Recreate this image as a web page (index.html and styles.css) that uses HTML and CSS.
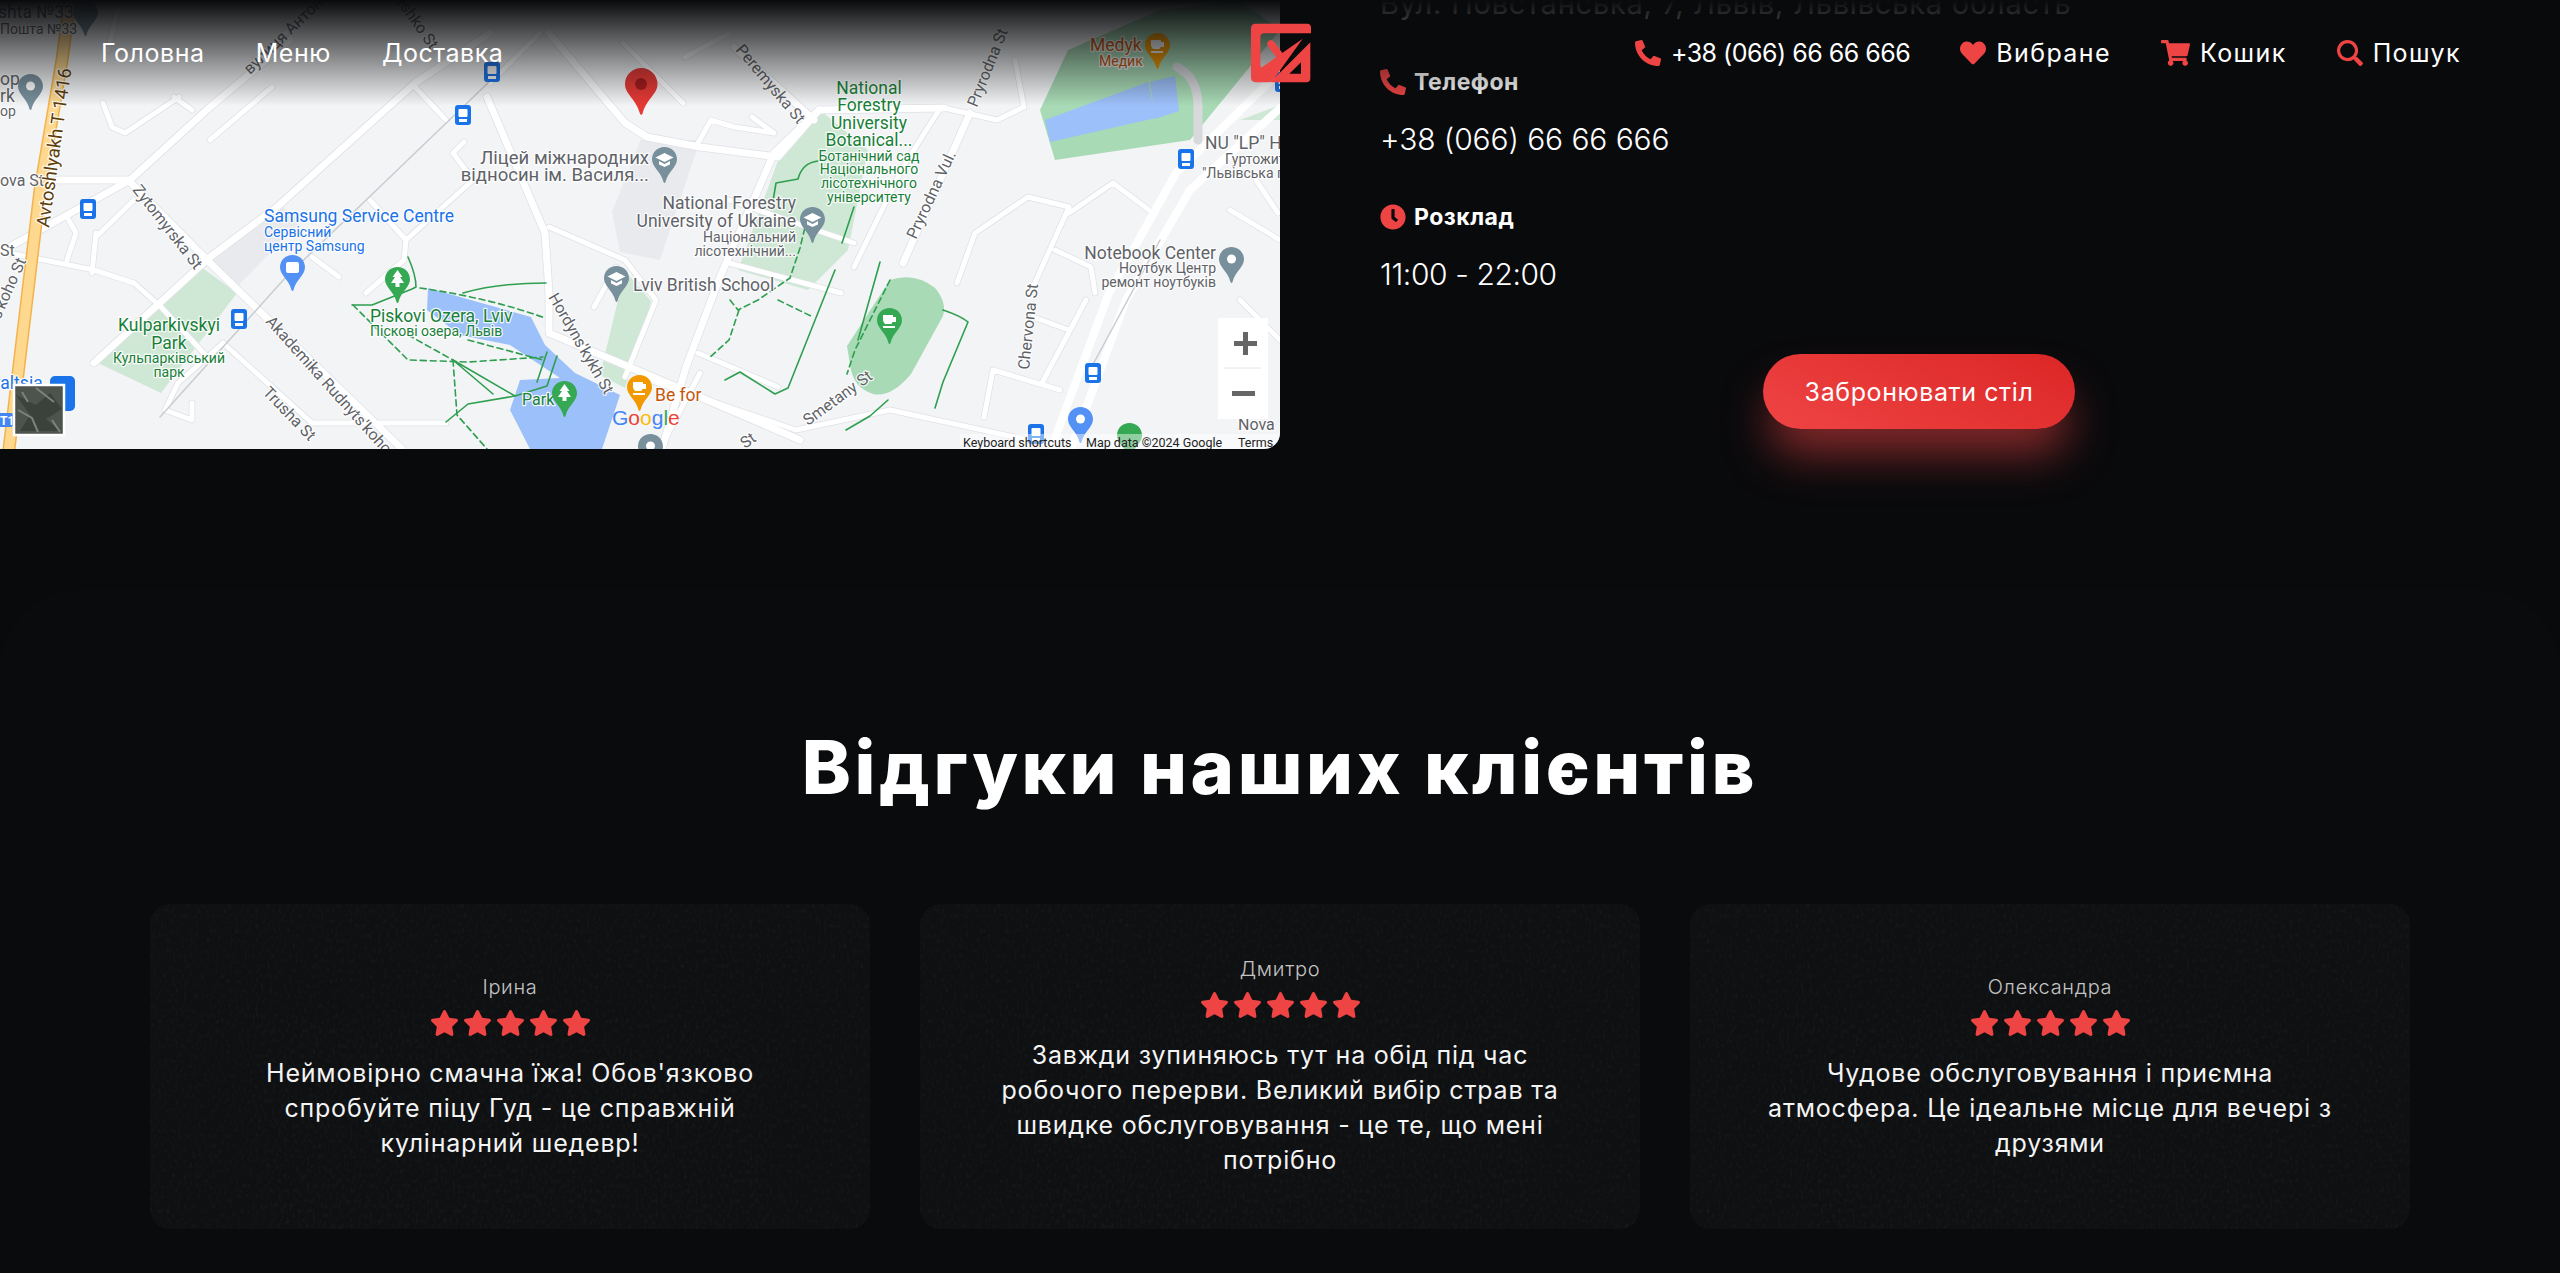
FILE: index.html
```html
<!DOCTYPE html>
<html lang="uk">
<head>
<meta charset="utf-8">
<title>Відгуки наших клієнтів</title>
<link rel="stylesheet" href="styles.css">
</head>
<body>
<svg class="defs" width="0" height="0" aria-hidden="true">
  <defs>
    <symbol id="i-phone" viewBox="0 0 512 512"><path d="M497.39 361.8l-112-48a24 24 0 0 0-28 6.9l-49.6 60.6A370.66 370.66 0 0 1 130.6 204.11l60.6-49.6a23.94 23.94 0 0 0 6.9-28l-48-112A24.16 24.16 0 0 0 122.6.61l-104 24A24 24 0 0 0 0 48c0 256.5 207.9 464 464 464a24 24 0 0 0 23.4-18.6l24-104a24.29 24.29 0 0 0-14.01-27.6z"/></symbol>
    <symbol id="i-heart" viewBox="0 0 512 512"><path d="M462.3 62.6C407.5 15.9 326 24.3 275.7 76.2L256 96.5l-19.7-20.3C186.1 24.3 104.5 15.9 49.7 62.6c-62.8 53.6-66.1 149.8-9.9 207.9l193.5 199.8c12.5 12.9 32.8 12.9 45.3 0l193.5-199.8c56.3-58.1 53-154.3-9.8-207.9z"/></symbol>
    <symbol id="i-cart" viewBox="0 0 576 512"><path d="M528.12 301.319l47.273-208C578.806 78.301 567.391 64 551.99 64H159.208l-9.166-44.81C147.758 8.021 137.93 0 126.529 0H24C10.745 0 0 10.745 0 24v16c0 13.255 10.745 24 24 24h69.883l70.248 343.435C147.325 417.1 136 435.222 136 456c0 30.928 25.072 56 56 56s56-25.072 56-56c0-15.674-6.447-29.835-16.824-40h209.647C430.447 426.165 424 440.326 424 456c0 30.928 25.072 56 56 56s56-25.072 56-56c0-22.172-12.888-41.332-31.579-50.405l5.517-24.276c3.413-15.018-8.002-29.319-23.403-29.319H218.117l-6.545-32h293.145c11.206 0 20.92-7.754 23.403-18.681z"/></symbol>
    <symbol id="i-search" viewBox="0 0 512 512"><path d="M505 442.7L405.3 343c-4.5-4.5-10.6-7-17-7H372c27.6-35.3 44-79.7 44-128C416 93.1 322.9 0 208 0S0 93.1 0 208s93.1 208 208 208c48.3 0 92.7-16.4 128-44v16.3c0 6.4 2.5 12.5 7 17l99.7 99.7c9.4 9.4 24.6 9.4 33.9 0l28.3-28.3c9.4-9.4 9.4-24.6.1-34zM208 352c-79.5 0-144-64.4-144-144 0-79.5 64.5-144 144-144 79.500 0 144 64.500 144 144 0 79.600-64.500 144-144 144z"/></symbol>
    <symbol id="i-clock" viewBox="0 0 512 512"><path d="M256,8C119,8,8,119,8,256S119,504,256,504,504,393,504,256,393,8,256,8Zm92.49,313h0l-20,25a16,16,0,0,1-22.49,2.5h0l-67-49.72a40,40,0,0,1-15-31.23V112a16,16,0,0,1,16-16h32a16,16,0,0,1,16,16V256l58,42.5A16,16,0,0,1,348.49,321Z"/></symbol>
    <symbol id="i-star" viewBox="0 0 576 512"><path d="M259.3 17.8L194 150.2 47.9 171.5c-26.2 3.8-36.7 36.1-17.7 54.6l105.7 103-25 145.5c-4.5 26.3 23.2 46 46.4 33.7L288 439.6l130.7 68.7c23.2 12.2 50.9-7.4 46.4-33.7l-25-145.500 105.700-103c19-18.500 8.500-50.800-17.700-54.600L382 150.200 316.700 17.800c-11.700-23.600-45.600-24.100-57.400 0z"/></symbol>
    <path id="pin" d="M12.500 0C5.600 0 0 5.400 0 12.300c0 8 8.500 11.500 11.500 22.700.3 1.200 1.700 1.200 2 0C16.500 23.800 25 20.300 25 12.300 25 5.400 19.400 0 12.500 0z"/>
    <g id="bus"><rect width="16" height="20" rx="3"/><rect x="3.500" y="4" width="9" height="8" rx="1" fill="#fff"/><rect x="4" y="14" width="8" height="3" fill="#fff"/></g>
    <g id="edu"><path d="M12.500 6l9 4.500-9 4.500-9-4.500z" fill="#fff"/><path d="M7 14v3.500l5.500 2.500 5.500-2.500V14l-5.500 3z" fill="#fff"/></g>
    <g id="tree"><path d="M12.500 3l5 7h-2.500l4 6h-4.500v4h-4v-4H6l4-6H7.500z" fill="#fff"/></g>
    <g id="cup"><path d="M6 7h10v2h3v5h-3.500l-1 2H8l-2-3zM6 18h12v2H6z" fill="#fff"/></g>
    <g id="dot"><circle cx="12.500" cy="12" r="4.500" fill="#fff"/></g>
    <filter id="grain" x="0" y="0" width="100%" height="100%">
      <feTurbulence type="fractalNoise" baseFrequency="0.35 0.2" numOctaves="3" seed="7"/>
      <feColorMatrix values="0 0 0 0 1  0 0 0 0 1  0 0 0 0 1  0 0 0 1.6 -0.75"/>
    </filter>
    <g id="minor">
      <path d="M103 103l9 24 13 6 54-36M174 97l18 13M210 140l62-53M415 87l31 33M464 142l-11 11 20 27-67 60-2 20-38 33M370 200l36 40M96 233l-4 40M96 237l38-37M67 260l9-27-9-16M312 257l27 20M549 227l76 33 31 40-31 77M594 307l22-40M223 343l-45 40-13 27 27 10v-17M698 143l13-23 23 7 40 6M752 117l22 16M685 57l45-24M944 108l53 12 27-13-9-47M854 243l-125-43M729 263l112 30M698 353l80 34M993 370l-9 47M993 370l67 20M1033 287l36-80-41-10-53 36-18 50M1069 213l44-30 40 30M1055 250l36 17 4 26M1086 300l-44 83M1033 317l36 13M1256 180l22 33M9 253l85 17 40 13 27 24 49 53M623 43l60 60M540 33l-50 50M700 373l-40 76M120 0l-12 50M255 60l45-40M1230 210l50 30M1240 300l40 40"/>
      <path d="M939 110l-36 57-49 100"/>
      <path d="M223 343l89 80h134M640 377l156 53 94-20 152 33"/>
    </g>
    <g id="major">
      <path d="M4 250l126-70 80-73 80-67"/>
      <path d="M94 363l116-106 67-50 138-124 75-50"/>
      <path d="M130 182l80 81 192 186"/>
      <path d="M487 97l58 136 4 60v40l151 64 100 43"/>
      <path d="M549 33l76 90 22 14 53 10 78 10 41-47 125-2"/>
      <path d="M819 110l-45 43-54 124-34 90-24 82"/>
      <path d="M734 47l80 73M58 180h72"/>
      <path d="M970 113l-67 150"/>
    </g>
  </defs>
</svg>

<div class="page">
  <header class="header">
    <nav class="nav">
      <a class="nav-link">Головна</a>
      <a class="nav-link">Меню</a>
      <a class="nav-link">Доставка</a>
    </nav>
    <svg class="logo" viewBox="90 70 180 175" role="img" aria-label="Логотип">
      <path d="M104 70H258Q270 70 270 82V98H130Q118 98 118 110V192Q118 205 127 197L245 115L158 236Q152 245 142 245H104Q90 245 90 231V84Q90 70 104 70Z"/>
      <path d="M150 130L178 168" class="logo-arm"/>
      <path fill-rule="evenodd" d="M268 125V233Q268 245 256 245H148ZM240 185V220H205Z"/>
    </svg>
    <nav class="nav nav-right">
      <a class="nav-link nav-phone"><svg class="ico"><use href="#i-phone"/></svg>+38 (066) 66 66 666</a>
      <a class="nav-link"><svg class="ico"><use href="#i-heart"/></svg>Вибране</a>
      <a class="nav-link"><svg class="ico ico-wide"><use href="#i-cart"/></svg>Кошик</a>
      <a class="nav-link"><svg class="ico"><use href="#i-search"/></svg>Пошук</a>
    </nav>
  </header>

  <section class="top">
    <div class="map">
      <svg class="map-svg" viewBox="0 0 1280 449" role="img" aria-label="Карта">
        <rect class="m-land" width="1280" height="449"/>
        <path class="m-block" d="M212 258l66-54 24 16-70 72zM640 140h60l-40 120-40-8-8-40 28-70zM620 230l-20 20"/>
        <path class="m-park-light" d="M98 363l103-96 36 26-76 100zM600 375l25-104 26 30 -6 25-20 62zM780 155l40-45 48 40-20 100-40 40-70-20zM1240 120l40-15v15z"/>
        <path class="m-park" d="M1040 110L1068 50l92-40 80-10 40 30-90 110-135 20z"/>
        <path class="m-water" d="M1045 120L1148 82l8 36-106 24zM1150 82l25-6 4 35-24 8z"/>
        <path class="m-park" d="M890 280q25-8 45 8 12 14 8 28l-32 58q-20 24-38 20-18-6-22-24l-4-24z"/>
        <path class="m-water" d="M428 288l103 29 14 28 30 28 45 22-18 54h-72l-20-39 10-30 40-2-50-33-50-10-33-25z"/>
        <use href="#minor" class="r-case r-minor"/>
        <use href="#major" class="r-case r-major"/>
        <use href="#minor" class="r-fill r-minor"/>
        <use href="#major" class="r-fill r-major"/>
        <path class="r-hw-case" d="M70 0L62 60 40 190 9 449"/>
        <path class="r-hw" d="M70 0L62 60 40 190 9 449"/>
        <path class="r-main" d="M1290 62L1176 173l-67 120-58 156"/>
        <path class="r-main-2" d="M1300 90L1190 190l-64 110-55 149"/>
        <path class="r-rail" d="M160 417L286 277 491 80M1160 240l-70 130"/>
        <path class="r-service" d="M1177 67q21 10 21 40v33"/>
        <path class="t-solid" d="M408 257q8 18 8 30l-4 2-40 16-20 0M463 293q35-10 83-10M453 360l62 36 32-10 10-30M453 360l40 34M515 396l-47 8-22 18M547 352l-10 30M818 161q-16 2-20 18l-22 4-3 18M854 207l-12 36M835 270l-47 118-13 6-35-22-15 8M880 262l-22 78M943 310q18 6 25 12l-25 60-8 26M888 400l-18 16-24 14"/>
        <path class="t-dash" d="M353 305l55 55 60 2 75-5M420 288q70 10 125 30M453 360l4 55 30 34M408 335l45 25M468 340l75 20M730 300l8 10 20-10 32-22 10-30 6-25M778 300l35 17M739 310l-10 30-20 18M890 280l-35 70-8 24"/>

        <g class="lbl lbl-grey">
          <text class="t-lg" x="-2" y="18">shta №33</text>
          <text class="t-sm" x="0" y="34">Пошта №33</text>
          <text class="t-lg" x="0" y="85">op</text><text class="t-lg" x="0" y="102">rk</text><text class="t-sm" x="0" y="116">op</text>
          <text class="t-md" x="0" y="186">ova St</text>
          <text class="t-md" x="0" y="256">St</text>
          <text class="t-md" transform="translate(0 320) rotate(-66)">s'koho St</text>
          <text class="t-md" transform="translate(132 190) rotate(52)">Zytomyrska St</text>
          <text class="t-md" transform="translate(265 322) rotate(48)">Akademika Rudnyts'koho St</text>
          <text class="t-md" transform="translate(262 393) rotate(46)">Trusha St</text>
          <text class="t-md" transform="translate(548 297) rotate(60)">Hordyns'kykh St</text>
          <text class="t-md" transform="translate(250 75) rotate(-44)">вулиця Антоно</text>
          <text class="t-md" transform="translate(395 0) rotate(55)">eshko St</text>
          <text class="t-md" transform="translate(735 50) rotate(50)">Peremyska St</text>
          <text class="t-md" transform="translate(977 108) rotate(-68)">Pryrodna St</text>
          <text class="t-md" transform="translate(916 240) rotate(-65)">Pryrodna Vul.</text>
          <text class="t-md" transform="translate(1029 370) rotate(-84)">Chervona St</text>
          <text class="t-md" transform="translate(808 426) rotate(-36)">Smetany St</text>
          <text class="t-md" transform="translate(745 449) rotate(-35)">St</text>
          <text class="t-xl end" x="649" y="164">Ліцей міжнародних</text>
          <text class="t-xl end" x="649" y="181">відносин ім. Василя...</text>
          <text class="t-lg end" x="796" y="209">National Forestry</text>
          <text class="t-lg end" x="796" y="227">University of Ukraine</text>
          <text class="t-sm end" x="796" y="242">Національний</text>
          <text class="t-sm end" x="796" y="256">лісотехнічний...</text>
          <text class="t-lg" x="633" y="291">Lviv British School</text>
          <text class="t-lg" x="1205" y="149">NU "LP" Hoste</text>
          <text class="t-sm" x="1225" y="164">Гуртожиток</text>
          <text class="t-sm" x="1202" y="178">"Львівська політехніка"</text>
          <text class="t-lg end" x="1216" y="259">Notebook Center</text>
          <text class="t-sm end" x="1216" y="273">Ноутбук Центр</text>
          <text class="t-sm end" x="1216" y="287">ремонт ноутбуків</text>
          <text class="t-md" x="1238" y="430">Nova</text>
        </g>
        <text class="lbl lbl-road t-xl" transform="translate(49 228) rotate(-82)">Avtoshlyakh T 1416</text>
        <g class="lbl lbl-blue">
          <text class="t-lg" x="264" y="222">Samsung Service Centre</text>
          <text class="t-sm" x="264" y="237">Сервісний</text>
          <text class="t-sm" x="264" y="251">центр Samsung</text>
          <text class="t-lg" x="-8" y="389">valtsia</text>
        </g>
        <g class="lbl lbl-green">
          <text class="t-lg" x="370" y="322">Piskovi Ozera, Lviv</text>
          <text class="t-sm" x="370" y="336">Піскові озера, Львів</text>
          <text class="t-lg mid" x="169" y="331">Kulparkivskyi</text>
          <text class="t-lg mid" x="169" y="349">Park</text>
          <text class="t-sm mid" x="169" y="363">Кульпарківський</text>
          <text class="t-sm mid" x="169" y="377">парк</text>
          <text class="t-md" x="522" y="405">Park</text>
          <text class="t-lg mid" x="869" y="94">National</text>
          <text class="t-lg mid" x="869" y="111">Forestry</text>
          <text class="t-lg mid" x="869" y="129">University</text>
          <text class="t-lg mid" x="869" y="146">Botanical...</text>
          <text class="t-sm mid" x="869" y="161">Ботанічний сад</text>
          <text class="t-sm mid" x="869" y="174">Національного</text>
          <text class="t-sm mid" x="869" y="188">лісотехнічного</text>
          <text class="t-sm mid" x="869" y="202">університету</text>
        </g>
        <g class="lbl lbl-orange">
          <text class="t-lg" x="655" y="401">Be for</text>
          <text class="t-lg" x="1090" y="51">Medyk</text>
          <text class="t-sm" x="1099" y="66">Медик</text>
        </g>
        <text class="g-logo" x="612" y="425"><tspan class="g-b">G</tspan><tspan class="g-r">o</tspan><tspan class="g-y">o</tspan><tspan class="g-b">g</tspan><tspan class="g-g">l</tspan><tspan class="g-r">e</tspan></text>

        <g class="p-grey"><use href="#pin" x="18" y="74"/><use href="#dot" x="18" y="74"/><use href="#pin" x="73" y="0"/><use href="#pin" x="652" y="147"/><use href="#edu" x="652" y="147"/><use href="#pin" x="800" y="207"/><use href="#edu" x="800" y="207"/><use href="#pin" x="604" y="266"/><use href="#edu" x="604" y="266"/><use href="#pin" x="1219" y="247"/><use href="#dot" x="1219" y="247"/><use href="#pin" x="638" y="434"/><use href="#dot" x="638" y="434"/></g>
        <g class="p-blue"><use href="#pin" x="280" y="255"/><rect x="286" y="262" width="13" height="11" rx="2" fill="#fff"/><use href="#pin" x="1068" y="407"/><use href="#dot" x="1068" y="407"/></g>
        <g class="p-green"><use href="#pin" x="385" y="267"/><use href="#tree" x="385" y="267"/><use href="#pin" x="552" y="381"/><use href="#tree" x="552" y="381"/><use href="#pin" x="877" y="308"/><use href="#cup" x="877" y="308"/><use href="#pin" x="1117" y="423"/></g>
        <g class="p-orange"><use href="#pin" x="627" y="375"/><use href="#cup" x="627" y="375"/><use href="#pin" x="1145" y="33"/><use href="#cup" x="1145" y="33"/></g>
        <use href="#pin" class="p-red" transform="translate(625 68) scale(1.3)"/>
        <circle class="p-red-dot" cx="641" cy="84" r="6"/>
        <g class="p-bus"><use href="#bus" x="80" y="199"/><use href="#bus" x="231" y="309"/><use href="#bus" x="455" y="105"/><use href="#bus" x="484" y="62"/><use href="#bus" x="1178" y="149"/><use href="#bus" x="1085" y="363"/><use href="#bus" x="1028" y="424"/><use href="#bus" x="1275" y="72"/></g>
        <rect class="p-bus" x="50" y="376" width="25" height="35" rx="5"/>
        <rect class="m-t1" x="-4" y="413" width="17" height="14" rx="2"/>
        <text class="m-t1-text" x="0" y="425">T1</text>

        <rect class="thumb" x="14" y="385" width="50" height="50"/>
        <path class="thumb-a" d="M16 395l20 10 14-12 12 16-16 10 14 12H20l10-16zM26 387l10 8M48 410l10 8"/>
        <path class="thumb-b" d="M18 410l14 8 6 14M36 388l18 14M52 420l8 12M22 392l6 10"/>

        <rect class="zoom-box" x="1218" y="318" width="50" height="101"/>
        <line class="zoom-sep" x1="1224" y1="368" x2="1261" y2="368"/>
        <path class="zoom-sign" d="M1243 332h5v9h9v5h-9v9h-5v-9h-9v-5h9zM1232 391h23v5h-23z"/>
        <rect class="attr-bg" x="960" y="434" width="320" height="15"/>
        <g class="attr">
          <text x="963" y="447">Keyboard shortcuts</text>
          <text x="1086" y="447">Map data ©2024 Google</text>
          <text x="1238" y="447">Terms</text>
        </g>
      </svg>
    </div>
    <div class="info">
      <p class="address">Вул. Повстанська, 7, Львів, Львівська область</p>
      <h3 class="info-label"><svg class="ico"><use href="#i-phone"/></svg>Телефон</h3>
      <p class="info-value info-phone">+38 (066) 66 66 666</p>
      <h3 class="info-label"><svg class="ico"><use href="#i-clock"/></svg>Розклад</h3>
      <p class="info-value">11:00 - 22:00</p>
      <div class="cta-row"><button class="cta">Забронювати стіл</button></div>
    </div>
  </section>

  <section class="reviews">
    <h2 class="reviews-title">Відгуки наших клієнтів</h2>
    <div class="reviews-grid">
      <article class="card">
        <svg class="card-grain" aria-hidden="true"><rect width="100%" height="100%" filter="url(#grain)"/></svg>
        <div class="card-name">Ірина</div>
        <div class="stars"><svg class="star"><use href="#i-star"/></svg><svg class="star"><use href="#i-star"/></svg><svg class="star"><use href="#i-star"/></svg><svg class="star"><use href="#i-star"/></svg><svg class="star"><use href="#i-star"/></svg></div>
        <p class="card-text">Неймовірно смачна їжа! Обов'язково<br>спробуйте піцу Гуд - це справжній<br>кулінарний шедевр!</p>
      </article>
      <article class="card">
        <svg class="card-grain" aria-hidden="true"><rect width="100%" height="100%" filter="url(#grain)"/></svg>
        <div class="card-name">Дмитро</div>
        <div class="stars"><svg class="star"><use href="#i-star"/></svg><svg class="star"><use href="#i-star"/></svg><svg class="star"><use href="#i-star"/></svg><svg class="star"><use href="#i-star"/></svg><svg class="star"><use href="#i-star"/></svg></div>
        <p class="card-text">Завжди зупиняюсь тут на обід під час<br>робочого перерви. Великий вибір страв та<br>швидке обслуговування - це те, що мені<br>потрібно</p>
      </article>
      <article class="card">
        <svg class="card-grain" aria-hidden="true"><rect width="100%" height="100%" filter="url(#grain)"/></svg>
        <div class="card-name">Олександра</div>
        <div class="stars"><svg class="star"><use href="#i-star"/></svg><svg class="star"><use href="#i-star"/></svg><svg class="star"><use href="#i-star"/></svg><svg class="star"><use href="#i-star"/></svg><svg class="star"><use href="#i-star"/></svg></div>
        <p class="card-text">Чудове обслуговування і приємна<br>атмосфера. Це ідеальне місце для вечері з<br>друзями</p>
      </article>
    </div>
  </section>
</div>
</body>
</html>
```
FILE: styles.css
```css
* { box-sizing: border-box; }
html, body { margin: 0; padding: 0; background: #090a0c; }
body { font-family: Inter, "Noto Sans", "Liberation Sans", sans-serif; color: #fff; }
.defs { position: absolute; }
p, h2, h3 { margin: 0; }

.page { position: relative; width: 2560px; height: 1273px; overflow: hidden; }

/* header overlay */
.header {
  position: absolute; top: 0; left: 0; right: 0; z-index: 5;
  height: 106px; padding: 0 99px 0 101px;
  display: grid; grid-template-columns: 1fr auto 1fr; align-items: center;
  background: linear-gradient(#090a0c 0%, rgba(9,10,12,0) 100%);
}
.nav { display: flex; align-items: center; gap: 51px; }
.nav-right { justify-content: flex-end; gap: 50px; }
.nav-link { display: flex; align-items: center; gap: 10px; font-size: 25px; font-weight: 400; letter-spacing: 0.55px; line-height: 32px; color: #fff; }
.nav-right .nav-link { letter-spacing: 1.4px; }
.nav-right .nav-phone { letter-spacing: -0.5px; }
.logo { display: block; width: 60px; height: 60px; fill: #ef4444; }
.logo-arm { stroke: #ef4444; stroke-width: 22; stroke-linecap: round; fill: none; }
.ico { width: 26px; height: 26px; fill: #ef4444; flex: none; }
.ico-wide { width: 29px; }

/* top */
.top { display: flex; height: 449px; }
.map { width: 1280px; height: 449px; flex: none; overflow: hidden; border-bottom-right-radius: 16px; }
.map-svg { display: block; width: 1280px; height: 449px; }
.info { flex: 1; padding: 0 102px 0 100px; margin-top: -14px; }
.address { font-size: 29px; line-height: 36px; letter-spacing: 0.8px; font-weight: 400; color: #fff; }
.info-label { display: flex; align-items: center; gap: 8px; margin-top: 44px; font-size: 23px; line-height: 32px; font-weight: 700; letter-spacing: 0.5px; color: #fff; }
.info-value { margin-top: 23px; font-size: 30px; line-height: 36px; font-weight: 300; letter-spacing: -0.4px; color: #fff; }
.info-phone { letter-spacing: -0.1px; }
.cta-row { display: flex; justify-content: center; margin-top: 62px; }
.cta {
  height: 75px; width: 312px; border: 0; border-radius: 38px;
  background: linear-gradient(205deg, #dc2626, #ef4444);
  box-shadow: 0 30px 45px -6px rgba(239, 68, 68, .55);
  color: #fff; font-family: inherit; font-size: 25px; letter-spacing: 0.6px; font-weight: 400;
}

/* map */
.m-land { fill: #f3f4f6; }
.m-block { fill: #e8eaed; }
.m-park { fill: #a8dab5; }
.m-park-light { fill: #cfe8d6; }
.m-water { fill: #9cc0f9; }
.r-case, .r-fill, .r-main, .r-main-2, .r-service, .r-hw, .r-hw-case, .r-rail, .t-solid, .t-dash { fill: none; stroke-linecap: round; stroke-linejoin: round; }
.r-case { stroke: #dfe1e5; }
.r-fill { stroke: #fff; }
.r-minor { stroke-width: 5px; }
.r-major { stroke-width: 7px; }
.r-case.r-minor { stroke-width: 6.5px; }
.r-case.r-major { stroke-width: 8.5px; }
.r-main { stroke: #fff; stroke-width: 8px; }
.r-main-2 { stroke: #fff; stroke-width: 8px; }
.r-service { stroke: #d7d9dd; stroke-width: 9px; }
.r-hw-case { stroke: #f2b34c; stroke-width: 13px; }
.r-hw { stroke: #fdd88e; stroke-width: 10px; }
.r-rail { stroke: #c9ccd1; stroke-width: 1.5px; }
.t-solid { stroke: #2e9e4f; stroke-width: 1.6px; }
.t-dash { stroke: #2e9e4f; stroke-width: 1.6px; stroke-dasharray: 6 4; }
.lbl text, .lbl { font-family: Roboto, "Liberation Sans", sans-serif; paint-order: stroke; stroke: rgba(255,255,255,.85); stroke-width: 2.5px; stroke-linejoin: round; }
.t-xl { font-size: 18.500px; }
.t-lg { font-size: 17.500px; }
.t-md { font-size: 16px; }
.t-sm { font-size: 14px; }
.end { text-anchor: end; }
.mid { text-anchor: middle; }
.lbl-grey { fill: #5f6368; }
.lbl-blue { fill: #1a73e8; }
.lbl-green { fill: #188038; }
.lbl-orange { fill: #c5560b; }
.lbl-road { fill: #5c3d08; }
.g-logo { font-family: "Liberation Sans", sans-serif; font-size: 21px; }
.g-b { fill: #4285f4; } .g-r { fill: #ea4335; } .g-y { fill: #fbbc05; } .g-g { fill: #34a853; }
.p-grey { fill: #78909c; }
.p-blue { fill: #5491f5; }
.p-green { fill: #34a853; }
.p-orange { fill: #f29900; }
.p-red { fill: #e53935; }
.p-red-dot { fill: #a51c1c; }
.p-bus { fill: #1a73e8; }
.m-t1 { fill: #4285f4; }
.m-t1-text { fill: #fff; font: 700 12px Roboto, sans-serif; }
.thumb { fill: #4d534d; stroke: #fff; stroke-width: 2.5px; }
.thumb-a { fill: #3b423c; }
.thumb-b { fill: none; stroke: #7c827d; stroke-width: 2px; }
.zoom-box { fill: #fff; }
.zoom-sep { stroke: #e6e6e6; stroke-width: 1px; }
.zoom-sign { fill: #666; }
.attr-bg { fill: rgba(255,255,255,.45); }
.attr text { font-family: Roboto, sans-serif; font-size: 12.500px; fill: #222; }

/* reviews */
.reviews {
  margin-top: 141px; height: 700px; padding: 0 150px;
  border-radius: 80px 80px 0 0; background: #0a0b0d;
}
.reviews-title {
  margin: 0; padding-top: 135px; text-align: center;
  font-size: 74px; line-height: 84px; font-weight: 800; letter-spacing: 3.6px; color: #fff;
}
.reviews-grid { display: grid; grid-template-columns: repeat(3, 1fr); gap: 50px; margin-top: 95px; }
.card {
  position: relative; overflow: hidden; height: 325px; border-radius: 20px; background: #0f1012;
  display: flex; flex-direction: column; align-items: center; justify-content: center; text-align: center;
}
.card-grain { position: absolute; inset: 0; width: 100%; height: 100%; opacity: .05; }
.card-name, .stars, .card-text { position: relative; }
.card-name { font-size: 20px; line-height: 28px; font-weight: 300; letter-spacing: 0.7px; color: #c4c4c4; }
.stars { display: flex; gap: 4px; margin-top: 8px; height: 28px; align-items: center; }
.star { width: 29px; height: 26px; fill: #ef4444; }
.card-text { margin-top: 19px; font-size: 25px; line-height: 35px; font-weight: 400; letter-spacing: 0.8px; color: #f4f4f4; }
```
